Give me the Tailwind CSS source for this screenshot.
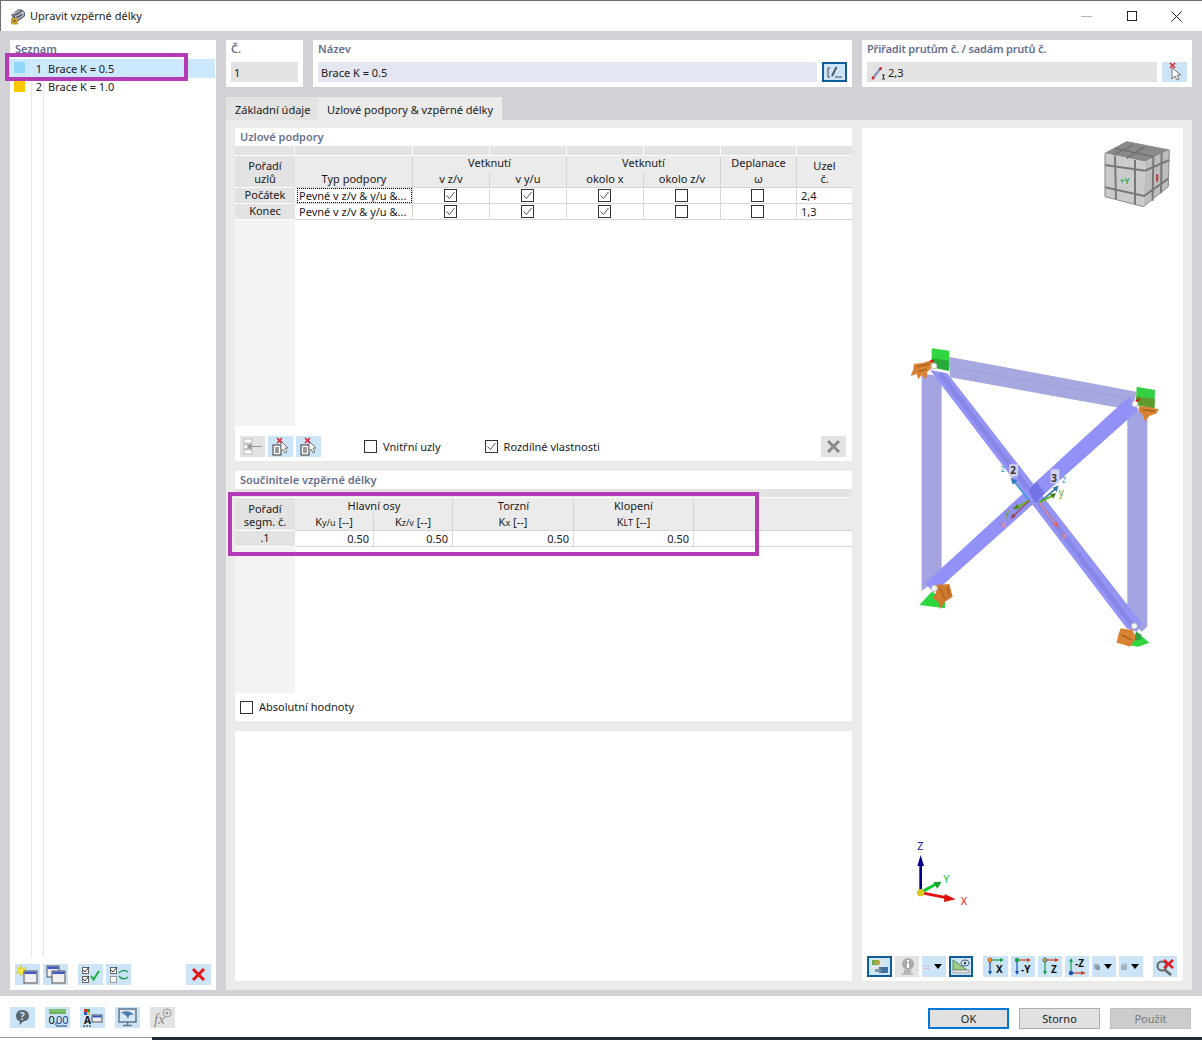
<!DOCTYPE html>
<html lang="cs">
<head>
    <meta charset="UTF-8">
    <meta name="viewport" content="width=device-width, initial-scale=1.0">
    <title>Upravit vzpěrné délky</title>
    <script src="https://cdn.jsdelivr.net/npm/@tailwindcss/browser@4"></script>
</head>
<body class="relative w-[1202px] h-[1040px] overflow-hidden bg-white text-[11px] leading-[16px] text-[#1a1a1a] font-['Noto_Sans',sans-serif]">

    <!-- Title bar -->
    <div class="flex items-center h-[31px] pl-[8px] border-t border-l border-[#6e6e6e]">
        <svg class="w-[17px] h-[17px]" viewBox="0 0 17 17">
            <path d="M2 7 L9 1.500 C12 0.500 15 2 16 5 C16.500 7 16 8 15 9 L8 14 Z" fill="#5f6672"/>
            <path d="M4 6 L11 2.500 M6 9 L14 4 M8 11.500 L15 7" stroke="#d8dbe2" stroke-width="1"/>
            <circle cx="13.500" cy="5" r="1.500" fill="#c6ccd6"/>
            <rect x="2" y="10" width="7" height="6.500" rx="1" fill="#c9a233"/>
            <path d="M3.500 10 V8.500 C3.500 7 7.500 7 7.500 8.500 V10" fill="none" stroke="#8d8d8d"/>
            <circle cx="5.500" cy="13" r="1" fill="#5a4610"/>
        </svg>
        <span class="ml-[4px] text-[11px] text-[#222]">Upravit vzpěrné délky</span>
        <div class="ml-auto flex items-center h-full">
            <div class="w-[45px] flex justify-center"><div class="w-[11px] h-px bg-[#b5b5b5]"></div></div>
            <div class="w-[45px] flex justify-center"><div class="w-[10px] h-[10px] border border-[#222]"></div></div>
            <div class="w-[45px] flex justify-center">
                <svg class="w-[11px] h-[11px]" viewBox="0 0 11 11"><path d="M.5 .5 L10.500 10.500 M10.500 .5 L.5 10.500" stroke="#222" stroke-width="1"/></svg>
            </div>
            <div class="w-[3px]"></div>
        </div>
    </div>

    <!-- Main area -->
    <div class="flex h-[965px] bg-[#d1d1d6] pl-[10px] pt-[9px] gap-[10px]">

        <!-- Seznam -->
        <aside class="flex flex-col w-[206px] h-[950px] bg-white">
            <div class="h-[19px] pl-[5px] pt-px font-semibold text-[#66708f]">Seznam</div>
            <div class="flex flex-col h-[899px]">
                <div class="flex h-[19px] bg-[#cce8ff] mr-px">
                    <div class="w-[22px] border-r border-[#e8e8e8] pl-[4px] pt-[3px]"><div class="w-[11px] h-[11px] bg-[#91d7f8]"></div></div>
                    <div class="w-[12px] border-r border-[#e8e8e8] text-right pr-[1px] pt-[2px]">1</div>
                    <div class="flex-1 pl-[4px] pt-[2px]">Brace K = 0.5</div>
                </div>
                <div class="flex h-[19px]">
                    <div class="w-[22px] border-r border-[#e8e8e8] pl-[4px] pt-[3px]"><div class="w-[11px] h-[11px] bg-[#f9c800]"></div></div>
                    <div class="w-[12px] border-r border-[#e8e8e8] text-right pr-[1px] pt-px">2</div>
                    <div class="flex-1 pl-[4px] pt-px">Brace K = 1.0</div>
                </div>
                <div class="flex flex-1">
                    <div class="w-[22px] border-r border-[#e8e8e8]"></div>
                    <div class="w-[12px] border-r border-[#e8e8e8]"></div>
                </div>
            </div>
            <div class="flex mt-[6px] pl-[5px] h-[21px]">
                <div class="w-[25px] h-[21px] bg-[#cce4f7]">
                    <svg viewBox="0 0 25 21"><path d="M6 1 L7.500 5 L11 3 L9.500 7 L12 9 L8 9 L6 12 L5 9 L1 9 L4 6.500 L2 3 L5 4.500 Z" fill="#f7e93a" stroke="#c9b400" stroke-width=".5"/><rect x="9" y="7" width="13" height="12" fill="#f0f0f0" stroke="#555"/><rect x="9.500" y="7.500" width="12" height="2.500" fill="#3f58c8"/></svg>
                </div>
                <div class="w-[25px] h-[21px] ml-[3px] bg-[#cce4f7]">
                    <svg viewBox="0 0 25 21"><rect x="4" y="2" width="12" height="11" fill="#f0f0f0" stroke="#555"/><rect x="4.500" y="2.500" width="11" height="2.500" fill="#3f58c8"/><rect x="9" y="7" width="13" height="12" fill="#f0f0f0" stroke="#555"/><rect x="9.500" y="7.500" width="12" height="2.500" fill="#3f58c8"/></svg>
                </div>
                <div class="w-[25px] h-[21px] ml-[10px] bg-[#cce4f7]">
                    <svg viewBox="0 0 25 21"><rect x="4.500" y="3.500" width="6" height="6" fill="#fff" stroke="#666"/><rect x="4.500" y="12.500" width="6" height="6" fill="#fff" stroke="#666"/><path d="M5 6 L7 8 L11 3 M5 15 L7 17 L11 12" fill="none" stroke="#333"/><path d="M13 12 L15.500 15.500 L21 7" fill="none" stroke="#1fae3c" stroke-width="2"/></svg>
                </div>
                <div class="w-[25px] h-[21px] ml-[3px] bg-[#cce4f7]">
                    <svg viewBox="0 0 25 21"><rect x="4.500" y="3.500" width="6" height="6" fill="#fff" stroke="#666"/><rect x="4.500" y="12.500" width="6" height="6" fill="#fff" stroke="#999"/><path d="M5 6 L7 8 L11 3" fill="none" stroke="#333"/><path d="M13 9 C15 6 19 6 22 8 M22 13 C19 16 15 15 13 12" fill="none" stroke="#1f9e4c" stroke-width="1.500"/></svg>
                </div>
                <div class="w-[25px] h-[21px] ml-[55px] bg-[#cce4f7]">
                    <svg viewBox="0 0 25 21"><path d="M7 5 L18 16 M18 5 L7 16" stroke="#e8141c" stroke-width="3"/></svg>
                </div>
            </div>
        </aside>

        <!-- Right side -->
        <div class="flex flex-col w-[966px]">
            <div class="flex gap-[10px] h-[47px]">
                <div class="w-[77px] bg-white px-[5px]">
                    <div class="h-[22px] pt-px font-semibold text-[#66708f]">Č.</div>
                    <div class="h-[20px] bg-[#e3e3e3] px-[3px] pt-[3px]">1</div>
                </div>
                <div class="w-[539px] bg-white px-[5px]">
                    <div class="h-[22px] pt-px font-semibold text-[#66708f]">Název</div>
                    <div class="flex">
                        <div class="w-[499px] h-[20px] bg-[#e4e6f1] px-[3px] pt-[3px]">Brace K = 0.5</div>
                        <div class="w-[25px] h-[20px] ml-[5px] bg-[#cce4f7] border-2 border-[#0f5c98]">
                            <svg viewBox="0 0 21 16"><path d="M6 4 H4 V13 H6 M11 13 H18" fill="none" stroke="#444"/><path d="M8 12 L12.500 3" stroke="#555" stroke-width="2"/></svg>
                        </div>
                    </div>
                </div>
                <div class="w-[330px] bg-white px-[5px]">
                    <div class="h-[22px] pt-px font-semibold text-[#66708f] tracking-[-0.18px]">Přiřadit prutům č. / sadám prutů č.</div>
                    <div class="flex">
                        <div class="flex items-center w-[290px] h-[20px] bg-[#e3e3e3] pl-[4px] pt-px">
                            <svg class="w-[16px] h-[16px]" viewBox="0 0 16 16"><path d="M2 13 L9 4" stroke="#8d96b5" stroke-width="2.500"/><circle cx="2" cy="13" r="1.500" fill="#d8202a"/><circle cx="9.500" cy="3.500" r="1.500" fill="#d8202a"/><path d="M11 10 H14 M12.500 10 V14 M11 14 H14" stroke="#333"/></svg>
                            <span class="ml-px">2,3</span>
                        </div>
                        <div class="w-[25px] h-[20px] ml-[5px] bg-[#cce4f7]">
                            <svg viewBox="0 0 25 20"><path d="M10 6 L10 17 L13 14 L15 18 L17 17 L15 13 L19 13 Z" fill="#fff" stroke="#777"/><path d="M8 1 L13 6 M13 1 L8 6" stroke="#e3202a" stroke-width="1.500"/></svg>
                        </div>
                    </div>
                </div>
            </div>

            <!-- Tabs -->
            <div class="flex mt-[10px] h-[23px]">
                <div class="w-[92px] bg-[#e3e3e3] pl-[9px] pt-[5px] leading-[16px]">Základní údaje</div>
                <div class="w-[184px] bg-[#ebebeb] text-center pt-[5px] leading-[16px]">Uzlové podpory &amp; vzpěrné délky</div>
            </div>

            <div class="flex h-[870px] w-[966px] bg-[#ebebeb] pl-[9px] pt-[8px] gap-[10px]">
                <div class="flex flex-col w-[617px]">

                    <!-- Uzlové podpory -->
                    <section class="h-[333px] bg-white">
                        <div class="h-[18px] pl-[5px] pt-px font-semibold text-[#66708f]">Uzlové podpory</div>
                        <div class="grid grid-cols-[60px_118px_77px_77px_77px_77px_76px_55px] grid-rows-[9px_1px_16px_16px_16px_16px] text-center">
                            <div class="bg-[#e3e3e3] border-r border-white col-span-1"></div>
                            <div class="bg-[#e3e3e3] border-r border-white"></div>
                            <div class="bg-[#e3e3e3] border-r border-white"></div>
                            <div class="bg-[#e3e3e3] border-r border-white"></div>
                            <div class="bg-[#e3e3e3] border-r border-white"></div>
                            <div class="bg-[#e3e3e3] border-r border-white"></div>
                            <div class="bg-[#e3e3e3] border-r border-white"></div>
                            <div class="bg-[#e3e3e3]"></div>
                            <div class="col-span-8 bg-white"></div>

                            <div class="row-span-2 bg-[#e3e3e3] border-b border-white leading-[13px] pt-[3px]">Pořadí<br>uzlů</div>
                            <div class="row-span-2 bg-[#ebebeb] border-r border-b border-[#d4d4d4] flex items-end justify-center pl-px">Typ podpory</div>
                            <div class="col-span-2 bg-[#ebebeb] border-r border-[#d4d4d4] leading-[14px]">Vetknutí</div>
                            <div class="col-span-2 bg-[#ebebeb] border-r border-[#d4d4d4] leading-[14px]">Vetknutí</div>
                            <div class="bg-[#ebebeb] border-r border-[#d4d4d4] leading-[14px]">Deplanace</div>
                            <div class="row-span-2 bg-[#ebebeb] border-b border-[#d4d4d4] leading-[13px] pt-[3px]">Uzel<br>č.</div>
                            <div class="bg-[#ebebeb] border-r border-b border-[#d4d4d4] leading-[14px]">v z/v</div>
                            <div class="bg-[#ebebeb] border-r border-b border-[#d4d4d4] leading-[14px]">v y/u</div>
                            <div class="bg-[#ebebeb] border-r border-b border-[#d4d4d4] leading-[14px]">okolo x</div>
                            <div class="bg-[#ebebeb] border-r border-b border-[#d4d4d4] leading-[14px]">okolo z/v</div>
                            <div class="bg-[#ebebeb] border-r border-b border-[#d4d4d4] leading-[14px]">ω</div>

                            <div class="bg-[#e3e3e3] border-b border-white leading-[13px]">Počátek</div>
                            <div class="border-r border-b border-[#d8d8d8] text-left pl-[2px]"><div class="border border-dotted border-black h-[15px] leading-[14px] pl-px whitespace-nowrap overflow-hidden">Pevné v z/v &amp; y/u &amp;...</div></div>
                            <div class="flex items-center justify-center pr-[2px] border-r border-b border-[#d8d8d8]"><svg class="w-[13px] h-[13px]" viewBox="0 0 13 13"><rect x=".5" y=".5" width="12" height="12" fill="#fff" stroke="#333"/><path d="M2.500 6.500 L5.500 9.500 L10.500 3" fill="none" stroke="#555"/></svg></div>
                            <div class="flex items-center justify-center pr-[2px] border-r border-b border-[#d8d8d8]"><svg class="w-[13px] h-[13px]" viewBox="0 0 13 13"><rect x=".5" y=".5" width="12" height="12" fill="#fff" stroke="#333"/><path d="M2.500 6.500 L5.500 9.500 L10.500 3" fill="none" stroke="#555"/></svg></div>
                            <div class="flex items-center justify-center pr-[2px] border-r border-b border-[#d8d8d8]"><svg class="w-[13px] h-[13px]" viewBox="0 0 13 13"><rect x=".5" y=".5" width="12" height="12" fill="#fff" stroke="#333"/><path d="M2.500 6.500 L5.500 9.500 L10.500 3" fill="none" stroke="#555"/></svg></div>
                            <div class="flex items-center justify-center pr-[2px] border-r border-b border-[#d8d8d8]"><div class="w-[13px] h-[13px] border border-[#333]"></div></div>
                            <div class="flex items-center justify-center pr-[2px] border-r border-b border-[#d8d8d8]"><div class="w-[13px] h-[13px] border border-[#333]"></div></div>
                            <div class="border-b border-[#d8d8d8] text-left pl-[4px]">2,4</div>

                            <div class="bg-[#e3e3e3] border-b border-white leading-[13px]">Konec</div>
                            <div class="border-r border-b border-[#d8d8d8] text-left pl-[4px] whitespace-nowrap overflow-hidden">Pevné v z/v &amp; y/u &amp;...</div>
                            <div class="flex items-center justify-center pr-[2px] border-r border-b border-[#d8d8d8]"><svg class="w-[13px] h-[13px]" viewBox="0 0 13 13"><rect x=".5" y=".5" width="12" height="12" fill="#fff" stroke="#333"/><path d="M2.500 6.500 L5.500 9.500 L10.500 3" fill="none" stroke="#555"/></svg></div>
                            <div class="flex items-center justify-center pr-[2px] border-r border-b border-[#d8d8d8]"><svg class="w-[13px] h-[13px]" viewBox="0 0 13 13"><rect x=".5" y=".5" width="12" height="12" fill="#fff" stroke="#333"/><path d="M2.500 6.500 L5.500 9.500 L10.500 3" fill="none" stroke="#555"/></svg></div>
                            <div class="flex items-center justify-center pr-[2px] border-r border-b border-[#d8d8d8]"><svg class="w-[13px] h-[13px]" viewBox="0 0 13 13"><rect x=".5" y=".5" width="12" height="12" fill="#fff" stroke="#333"/><path d="M2.500 6.500 L5.500 9.500 L10.500 3" fill="none" stroke="#555"/></svg></div>
                            <div class="flex items-center justify-center pr-[2px] border-r border-b border-[#d8d8d8]"><div class="w-[13px] h-[13px] border border-[#333]"></div></div>
                            <div class="flex items-center justify-center pr-[2px] border-r border-b border-[#d8d8d8]"><div class="w-[13px] h-[13px] border border-[#333]"></div></div>
                            <div class="border-b border-[#d8d8d8] text-left pl-[4px]">1,3</div>
                        </div>
                        <div class="w-[60px] h-[206px] bg-[#f3f3f3]"></div>
                        <div class="flex items-center h-[21px] mt-[10px] pl-[5px]">
                            <div class="w-[25px] h-[21px] bg-[#e3e3e3]">
                                <svg viewBox="0 0 25 21"><rect x="4" y="3" width="8" height="4" fill="#fff" stroke="#bbb"/><rect x="4" y="8.500" width="8" height="4" fill="#fff" stroke="#bbb"/><rect x="4" y="14" width="8" height="4" fill="#fff" stroke="#bbb"/><path d="M7 10.500 H22 M7 10.500 L11 8 V13 Z" stroke="#999" fill="#999"/></svg>
                            </div>
                            <div class="w-[25px] h-[21px] ml-[3px] bg-[#cce4f7]">
                                <svg viewBox="0 0 25 21"><rect x="5" y="9" width="8" height="10" fill="#fff" stroke="#333"/><path d="M7 12 H11 M7 14 H11 M7 16 H11" stroke="#333"/><path d="M13 5 V15 L15 13 L17 17 L19 16 L17 12 L20 12 Z" fill="#fff" stroke="#777"/><path d="M9 2 L14 7 M14 2 L9 7" stroke="#e3202a" stroke-width="1.500"/></svg>
                            </div>
                            <div class="w-[25px] h-[21px] ml-[3px] bg-[#cce4f7]">
                                <svg viewBox="0 0 25 21"><rect x="5" y="9" width="8" height="10" fill="#fff" stroke="#333"/><path d="M7 12 H11 M7 14 H11 M7 16 H11" stroke="#333"/><path d="M13 5 V15 L15 13 L17 17 L19 16 L17 12 L20 12 Z" fill="#fff" stroke="#777"/><path d="M9 2 L14 7 M14 2 L9 7" stroke="#e3202a" stroke-width="1.500"/></svg>
                            </div>
                            <div class="w-[13px] h-[13px] ml-[43px] border border-[#333]"></div>
                            <span class="ml-[6px]">Vnitřní uzly</span>
                            <svg class="w-[13px] h-[13px] ml-[44px]" viewBox="0 0 13 13"><rect x=".5" y=".5" width="12" height="12" fill="#fff" stroke="#333"/><path d="M2.500 6.500 L5.500 9.500 L10.500 3" fill="none" stroke="#555"/></svg>
                            <span class="ml-[6px]">Rozdílné vlastnosti</span>
                            <div class="ml-auto mr-[6px] w-[25px] h-[21px] bg-[#e3e3e3]">
                                <svg viewBox="0 0 25 21"><path d="M7 5 L18 16 M18 5 L7 16" stroke="#8a8a8a" stroke-width="3"/></svg>
                            </div>
                        </div>
                    </section>

                    <!-- Součinitele vzpěrné délky -->
                    <section class="h-[250px] mt-[10px] bg-white">
                        <div class="h-[18px] pl-[5px] pt-px font-semibold text-[#66708f]">Součinitele vzpěrné délky</div>
                        <div class="grid grid-cols-[60px_79px_79px_121px_120px_158px] grid-rows-[8px_1px_16px_17px_16px] text-center">
                            <div class="col-span-6 bg-[#e3e3e3]"></div>
                            <div class="col-span-6 bg-white"></div>
                            <div class="row-span-2 bg-[#e3e3e3] border-b border-white leading-[13px] pt-[4px]">Pořadí<br>segm. č.</div>
                            <div class="col-span-2 bg-[#ebebeb] border-r border-[#d4d4d4] pl-px">Hlavní osy</div>
                            <div class="bg-[#ebebeb] border-r border-[#d4d4d4] pl-px">Torzní</div>
                            <div class="bg-[#ebebeb] border-r border-[#d4d4d4]">Klopení</div>
                            <div class="row-span-2 bg-[#ebebeb] border-b border-[#d4d4d4]"></div>
                            <div class="bg-[#ebebeb] border-r border-b border-[#d4d4d4]">K<span class="text-[9px]">y/u</span> [--]</div>
                            <div class="bg-[#ebebeb] border-r border-b border-[#d4d4d4]">K<span class="text-[9px]">z/v</span> [--]</div>
                            <div class="bg-[#ebebeb] border-r border-b border-[#d4d4d4]">K<span class="text-[9px]">x</span> [--]</div>
                            <div class="bg-[#ebebeb] border-r border-b border-[#d4d4d4]">K<span class="text-[9px]">LT</span> [--]</div>
                            <div class="bg-[#e3e3e3] border-b border-white leading-[14px]">.1</div>
                            <div class="border-r border-b border-[#d8d8d8] text-right pr-[4px]">0.50</div>
                            <div class="border-r border-b border-[#d8d8d8] text-right pr-[4px]">0.50</div>
                            <div class="border-r border-b border-[#d8d8d8] text-right pr-[4px]">0.50</div>
                            <div class="border-r border-b border-[#d8d8d8] text-right pr-[4px]">0.50</div>
                            <div class="border-b border-[#d8d8d8]"></div>
                        </div>
                        <div class="w-[60px] h-[146px] bg-[#f3f3f3]"></div>
                        <div class="flex items-center h-[16px] mt-[6px] pl-[5px]">
                            <div class="w-[13px] h-[13px] border border-[#333]"></div>
                            <span class="ml-[6px]">Absolutní hodnoty</span>
                        </div>
                    </section>

                    <section class="h-[250px] mt-[10px] bg-white"></section>
                </div>

                <!-- 3D view -->
                <div class="flex flex-col w-[321px] h-[853px] bg-white">
                    <svg class="block w-[321px] h-[828px]" viewBox="862 128 321 828" font-family="Noto Sans, sans-serif">
                        <!-- orientation cube -->
                        <g transform="translate(1090 130) scale(.3333)">
                            <path d="M45 70 L110 35 L238 60 L165 95 Z" fill="#8a8a8a"/>
                            <path d="M45 70 L165 95 L160 230 L45 200 Z" fill="#cbcbcb"/>
                            <path d="M165 95 L238 60 L235 170 L160 230 Z" fill="#bdbdbd"/>
                            <path d="M45 105 L165 122 L238 90 M45 172 L162 198 L236 145 M75 78 L78 208 M135 90 L135 222 M190 82 L188 212 M215 70 L213 190" fill="none" stroke="#787878" stroke-width="6"/>
                            <path d="M75 55 L190 80 M130 45 L70 75 M165 50 L110 85" fill="none" stroke="#6e6e6e" stroke-width="4"/>
                            <path d="M45 70 L110 35 L238 60 L235 170 L160 230 L45 200 Z" fill="none" stroke="#8a8a8a" stroke-width="3"/>
                            <text x="90" y="163" font-size="24" font-weight="700" fill="#3aa655">+Y</text>
                            <rect x="198" y="133" width="7" height="22" fill="#b9474f"/>
                        </g>

                        <!-- structure -->
                        <g transform="translate(890 330) scale(.3333)">
                            <path d="M95 130 L155 140 L155 740 L95 782 Z" fill="#a4a4e2"/>
                            <path d="M712 240 L772 245 L772 890 L755 905 L712 860 Z" fill="#a4a4e2"/>
                            <path d="M175 80 L740 185 L735 210 L695 235 L180 142 Z" fill="#a8a8e0"/>
                            <path d="M200 115 L720 205" stroke="#8f8fb5" stroke-width="2" stroke-dasharray="4 3"/>
                            <path d="M120 120 L172 130 L757 882 L740 905 L710 895 Z" fill="#9494f4"/>
                            <path d="M150 130 L730 890" stroke="#7676d8" stroke-width="14" opacity=".45"/>
                            <path d="M700 215 L722 200 L745 240 L155 768 L130 785 L105 760 Z" fill="#9191f8"/>
                            <path d="M415 480 L440 455 L465 490 L435 520 Z" fill="#7474e6"/>

                            <!-- supports -->
                            <path d="M125 55 L178 62 L176 122 L125 112 Z" fill="#2fd63f"/>
                            <path d="M125 85 L176 92 L176 122 L125 112 Z" fill="#27a838"/>
                            <path d="M740 170 L795 180 L793 235 L738 225 Z" fill="#33d043"/>
                            <path d="M738 198 L795 208 L793 235 L738 225 Z" fill="#5e9a2e"/>
                            <path d="M88 825 L125 785 L165 805 L165 835 Z" fill="#2fd63f"/>
                            <path d="M712 945 L740 905 L778 938 L745 950 Z" fill="#2fd63f"/>
                            <path d="M72 102 L100 98 L125 90 L132 108 L112 125 L108 150 L95 135 L85 148 L80 132 L62 138 L70 118 Z" fill="#d88333"/>
                            <path d="M80 110 L118 102 M85 125 L108 118" stroke="#a85f20" stroke-width="4"/>
                            <path d="M748 228 L780 232 L806 238 L800 250 L778 258 L765 275 L760 258 L745 240 Z" fill="#d88333"/>
                            <path d="M758 240 L795 243" stroke="#a85f20" stroke-width="4"/>
                            <path d="M135 765 L178 762 L188 800 L165 815 L150 838 L145 815 L128 805 L138 790 Z" fill="#cf7a2e"/>
                            <path d="M150 775 L165 808 M172 772 L178 795" stroke="#a85f20" stroke-width="4"/>
                            <path d="M692 895 L728 900 L738 925 L720 950 L705 945 L680 938 L685 915 Z" fill="#d88333"/>
                            <path d="M695 915 L725 930" stroke="#a85f20" stroke-width="4"/>
                            <path d="M738 905 L755 915 L750 930 L735 930 Z" fill="#2f9e3f"/>
                            <circle cx="132" cy="108" r="9" fill="#fff" stroke="#b8b8b8" stroke-width="3"/>
                            <circle cx="735" cy="222" r="9" fill="#fff" stroke="#b8b8b8" stroke-width="3"/>
                            <circle cx="133" cy="775" r="9" fill="#fff" stroke="#b8b8b8" stroke-width="3"/>
                            <circle cx="733" cy="888" r="9" fill="#fff" stroke="#b8b8b8" stroke-width="3"/>
                            <path d="M120 95 L132 92 M738 213 L750 208" stroke="#e01010" stroke-width="5"/>

                            <!-- local axes -->
                            <path d="M418 512 L370 452" stroke="#3f9ad6" stroke-width="5"/>
                            <path d="M362 443 L382 452 L368 464 Z" fill="#3278b0"/>
                            <path d="M418 512 L380 532" stroke="#69b51e" stroke-width="6"/>
                            <path d="M368 538 L382 522 L388 536 Z" fill="#4e8a12"/>
                            <path d="M418 512 L368 560" stroke="#96504f" stroke-width="4"/>
                            <path d="M360 567 L368 550 L378 560 Z" fill="#96504f"/>
                            <path d="M448 518 L498 475" stroke="#3278b0" stroke-width="5"/>
                            <path d="M506 466 L500 486 L488 473 Z" fill="#3278b0"/>
                            <path d="M448 518 L488 497" stroke="#69b51e" stroke-width="6"/>
                            <path d="M498 490 L490 506 L480 492 Z" fill="#3f7d12"/>
                            <path d="M448 518 L498 585" stroke="#e58a8a" stroke-width="4"/>
                            <path d="M506 595 L490 583 L503 574 Z" fill="#d96a6a"/>
                            <rect x="358" y="403" width="26" height="37" fill="#d2d2ec"/>
                            <rect x="482" y="418" width="26" height="42" fill="#d2d2ec"/>
                            <text x="361" y="431" font-size="30" font-weight="700" fill="#333">2</text>
                            <text x="484" y="455" font-size="30" font-weight="700" fill="#333">3</text>
                            <text x="332" y="425" font-size="30" fill="#5aa9e6">z</text>
                            <text x="515" y="459" font-size="30" fill="#5aa9e6">z</text>
                            <text x="506" y="499" font-size="30" fill="#69a92c">y</text>
                            <text x="344" y="558" font-size="30" fill="#69a92c">y</text>
                            <text x="332" y="593" font-size="30" fill="#ee8a8a">x</text>
                            <text x="514" y="628" font-size="30" fill="#ee8a8a">x</text>
                        </g>

                        <!-- global axes -->
                        <g transform="translate(860 830) scale(.3333)">
                            <path d="M182 188 V100" stroke="#00008b" stroke-width="8"/>
                            <path d="M182 75 L192 108 H172 Z" fill="#00008b"/>
                            <path d="M182 188 L228 162" stroke="#12c832" stroke-width="9"/>
                            <path d="M245 155 L220 157 L232 176 Z" fill="#12a02c"/>
                            <path d="M182 188 L258 203" stroke="#e01010" stroke-width="8"/>
                            <path d="M287 208 L254 192 L252 216 Z" fill="#e01010"/>
                            <circle cx="182" cy="188" r="11" fill="#d8c81e"/>
                            <text x="172" y="60" font-size="32" fill="#1a1a9a">Z</text>
                            <text x="250" y="160" font-size="32" fill="#12c832">Y</text>
                            <text x="302" y="225" font-size="32" fill="#e01010">X</text>
                        </g>
                    </svg>

                    <!-- view toolbar -->
                    <div class="flex h-[21px] pl-[5px]">
                        <div class="w-[25px] h-[21px] bg-[#cce4f7] border-2 border-[#0f5c98]">
                            <svg viewBox="0 0 21 17"><rect x="2" y="1" width="13" height="11" fill="#dfe6ea"/><rect x="3" y="2" width="7" height="5" fill="#76a84e"/><rect x="6" y="3" width="5" height="3" fill="#c8a23c"/><rect x="10" y="9" width="9" height="6" fill="#41729e"/><rect x="6" y="11" width="6" height="3" fill="#7c94a8"/></svg>
                        </div>
                        <div class="w-[24px] h-[21px] ml-[3px] bg-[#e3e3e3]">
                            <svg viewBox="0 0 24 21"><circle cx="13" cy="8" r="6" fill="#aaa"/><rect x="9" y="14" width="7" height="3" fill="#b5b5b5"/><rect x="7" y="17" width="11" height="2" fill="#bbb"/><path d="M13 4 V6 M13 7 V12" stroke="#fff" stroke-width="2"/></svg>
                        </div>
                        <div class="flex items-center w-[24px] h-[21px] ml-[3px] bg-[#cce4f7] pl-[1px]">
                            <svg class="w-[8px] h-[8px]" viewBox="0 0 8 8"><path d="M1 3 H7 M1 5.500 H7" stroke="#c9a0b0" stroke-dasharray="1 1"/></svg>
                            <div class="ml-[3px] w-0 h-0 border-x-[4px] border-x-transparent border-t-[5px] border-t-black"></div>
                        </div>
                        <div class="w-[24px] h-[21px] ml-[3px] bg-[#cce4f7] border-2 border-[#0f5c98]">
                            <svg viewBox="0 0 20 17"><path d="M2 2 L16 12 H2 Z" fill="#9ad08a" stroke="#5d8a55"/><rect x="2" y="12" width="16" height="3" fill="#ddd" stroke="#777" stroke-width=".5"/><ellipse cx="14" cy="5" rx="4" ry="3" fill="#fff" stroke="#3a5a8a"/><circle cx="14" cy="5" r="1.500" fill="#2b4a80"/></svg>
                        </div>
                        <div class="w-[25px] h-[21px] ml-[10px] bg-[#cce4f7]">
                            <svg viewBox="0 0 25 21" font-family="Noto Sans, sans-serif"><path d="M7 4 H18" stroke="#14a04c" stroke-width="1.200"/><path d="M21 4 L17 2 V6 Z" fill="#14a04c"/><path d="M7 4 V16" stroke="#1a4fc0" stroke-width="1.200"/><path d="M7 19 L5 15 H9 Z" fill="#1a4fc0"/><circle cx="7" cy="4" r="2" fill="#e7b400" stroke="#d0301c" stroke-width=".8"/><text x="13" y="17" font-size="10" font-weight="700" fill="#111">X</text></svg>
                        </div>
                        <div class="w-[24px] h-[21px] ml-[3px] bg-[#cce4f7]">
                            <svg viewBox="0 0 24 21" font-family="Noto Sans, sans-serif"><path d="M6 4 H17" stroke="#d0401c" stroke-width="1.200"/><path d="M20 4 L16 2 V6 Z" fill="#d0401c"/><path d="M6 4 V16" stroke="#1a4fc0" stroke-width="1.200"/><path d="M6 19 L4 15 H8 Z" fill="#1a4fc0"/><circle cx="6" cy="4" r="2.200" fill="#14a04c"/><text x="10" y="17" font-size="10" font-weight="700" fill="#111">-Y</text></svg>
                        </div>
                        <div class="w-[24px] h-[21px] ml-[3px] bg-[#cce4f7]">
                            <svg viewBox="0 0 24 21" font-family="Noto Sans, sans-serif"><path d="M7 4 H18" stroke="#d0401c" stroke-width="1.200"/><path d="M21 4 L17 2 V6 Z" fill="#d0401c"/><path d="M7 4 V16" stroke="#14a04c" stroke-width="1.200"/><path d="M7 19 L5 15 H9 Z" fill="#14a04c"/><circle cx="7" cy="4" r="2" fill="#e7b400" stroke="#1a4fc0" stroke-width=".8"/><text x="13" y="17" font-size="10" font-weight="700" fill="#111">Z</text></svg>
                        </div>
                        <div class="w-[24px] h-[21px] ml-[3px] bg-[#cce4f7]">
                            <svg viewBox="0 0 24 21" font-family="Noto Sans, sans-serif"><path d="M6 17 V5" stroke="#14a04c" stroke-width="1.200"/><path d="M6 2 L4 6 H8 Z" fill="#14a04c"/><path d="M6 17 H17" stroke="#d0401c" stroke-width="1.200"/><path d="M21 17 L16 15 V19 Z" fill="#d0401c"/><circle cx="6" cy="17" r="2.200" fill="#1a4fc0"/><text x="10" y="11" font-size="10" font-weight="700" fill="#111">-Z</text></svg>
                        </div>
                        <div class="flex items-center w-[24px] h-[21px] ml-[3px] bg-[#cce4f7] pl-[1px]">
                            <svg class="w-[8px] h-[8px]" viewBox="0 0 8 8"><rect x="1" y="1" width="5" height="5" fill="#a0aab8"/><rect x="3" y="3" width="4" height="4" fill="#8b98aa"/></svg>
                            <div class="ml-[3px] w-0 h-0 border-x-[4px] border-x-transparent border-t-[5px] border-t-black"></div>
                        </div>
                        <div class="flex items-center w-[24px] h-[21px] ml-[3px] bg-[#cce4f7] pl-[1px]">
                            <svg class="w-[8px] h-[8px]" viewBox="0 0 8 8"><rect x="1" y="2" width="6" height="5" fill="#a4b2c2"/><path d="M1 2 L3 0 H8 L7 2 Z" fill="#c0cad6"/></svg>
                            <div class="ml-[3px] w-0 h-0 border-x-[4px] border-x-transparent border-t-[5px] border-t-black"></div>
                        </div>
                        <div class="w-[24px] h-[21px] ml-[10px] bg-[#cce4f7]">
                            <svg viewBox="0 0 24 21"><circle cx="9" cy="10" r="4.500" fill="none" stroke="#666" stroke-width="2"/><path d="M12 14 L18 19" stroke="#666" stroke-width="2.500"/><path d="M11 4 L20 12 M20 4 L11 12" stroke="#e3202a" stroke-width="2.500"/></svg>
                        </div>
                    </div>
                </div>
            </div>
        </div>
    </div>

    <!-- Footer -->
    <div class="flex items-start h-[41px] pl-[10px] pt-[11px]">
        <div class="w-[25px] h-[21px] bg-[#cce4f7]">
            <svg viewBox="0 0 25 21"><path d="M12.500 3 C8 3 6 6 6 9 C6 12 8 14 10 14 L9 18 L14 14 C17 14 19 12 19 9 C19 6 17 3 12.500 3 Z" fill="#5a6672"/><text x="10" y="13" font-size="10" font-weight="700" fill="#cce4f7" font-family="Noto Sans, sans-serif">?</text></svg>
        </div>
        <div class="w-[25px] h-[21px] ml-[10px] bg-[#cce4f7]">
            <svg viewBox="0 0 25 21" font-family="Noto Sans, sans-serif"><rect x="4" y="2" width="17" height="5" fill="#7fc26b"/><path d="M7 5 V7 M10 5 V7 M13 5 V7 M16 5 V7 M19 5 V7" stroke="#4e8c40"/><text x="3.500" y="17" font-size="11" fill="#111">0,</text><text x="11" y="17" font-size="11" fill="#1a3f8a">00</text><path d="M11 19 H22" stroke="#1a3f8a"/></svg>
        </div>
        <div class="w-[25px] h-[21px] ml-[10px] bg-[#cce4f7]">
            <svg viewBox="0 0 25 21" font-family="Noto Sans, sans-serif"><rect x="4" y="2" width="3" height="3" fill="#d9301c"/><rect x="7" y="2" width="3" height="3" fill="#2a9a3c"/><rect x="4" y="5" width="3" height="3" fill="#2a5ac8"/><rect x="7" y="5" width="3" height="3" fill="#e3c01c"/><text x="4" y="17" font-size="10" font-weight="700" fill="#111">A</text><path d="M3 19 H12" stroke="#111" stroke-dasharray="2 1"/><rect x="12" y="8" width="10" height="7" fill="#f0f0f0" stroke="#555"/><rect x="12.500" y="8.500" width="9" height="2" fill="#3f58c8"/></svg>
        </div>
        <div class="w-[25px] h-[21px] ml-[10px] bg-[#cce4f7]">
            <svg viewBox="0 0 25 21"><rect x="4" y="2" width="17" height="13" fill="#d8e6f2" stroke="#5f7890" stroke-width="1.500"/><path d="M6 6 C10 3 16 4 19 8 C15 7 14 8 13 12 C12 9 10 7 6 6 Z" fill="#4f7ea8"/><path d="M12.500 15 V18 M8 18.500 H17" stroke="#5f7890" stroke-width="1.500"/></svg>
        </div>
        <div class="w-[25px] h-[21px] ml-[10px] bg-[#e3e3e3]">
            <svg viewBox="0 0 25 21" font-family="Liberation Serif, serif"><text x="4" y="17" font-size="15" font-style="italic" fill="#888">fx</text><circle cx="17" cy="6" r="4" fill="none" stroke="#999"/><circle cx="17" cy="6" r="1.500" fill="#999"/></svg>
        </div>
        <div class="ml-auto flex mt-px mr-[11px] text-center">
            <div class="w-[81px] h-[21px] bg-[#e1e1e1] border-2 border-[#0078d7] leading-[17px]">OK</div>
            <div class="w-[81px] h-[21px] ml-[10px] bg-[#e1e1e1] border border-[#adadad] leading-[19px]">Storno</div>
            <div class="w-[81px] h-[21px] ml-[10px] bg-[#cccccc] border border-[#bfbfbf] leading-[19px] text-[#7a7a7a]">Použít</div>
        </div>
    </div>
    <div class="flex h-[3px]">
        <div class="w-[152px] border-t border-[#9a9a9a]"></div>
        <div class="flex-1 bg-[#1e2d38]"></div>
    </div>

    <!-- Purple highlight frames -->
    <div class="absolute left-[5px] top-[53px] w-[183px] h-[28px] border-4 border-[#b53ab5]"></div>
    <div class="absolute left-[228px] top-[492px] w-[531px] h-[64px] border-4 border-[#b53ab5]"></div>
</body>
</html>
